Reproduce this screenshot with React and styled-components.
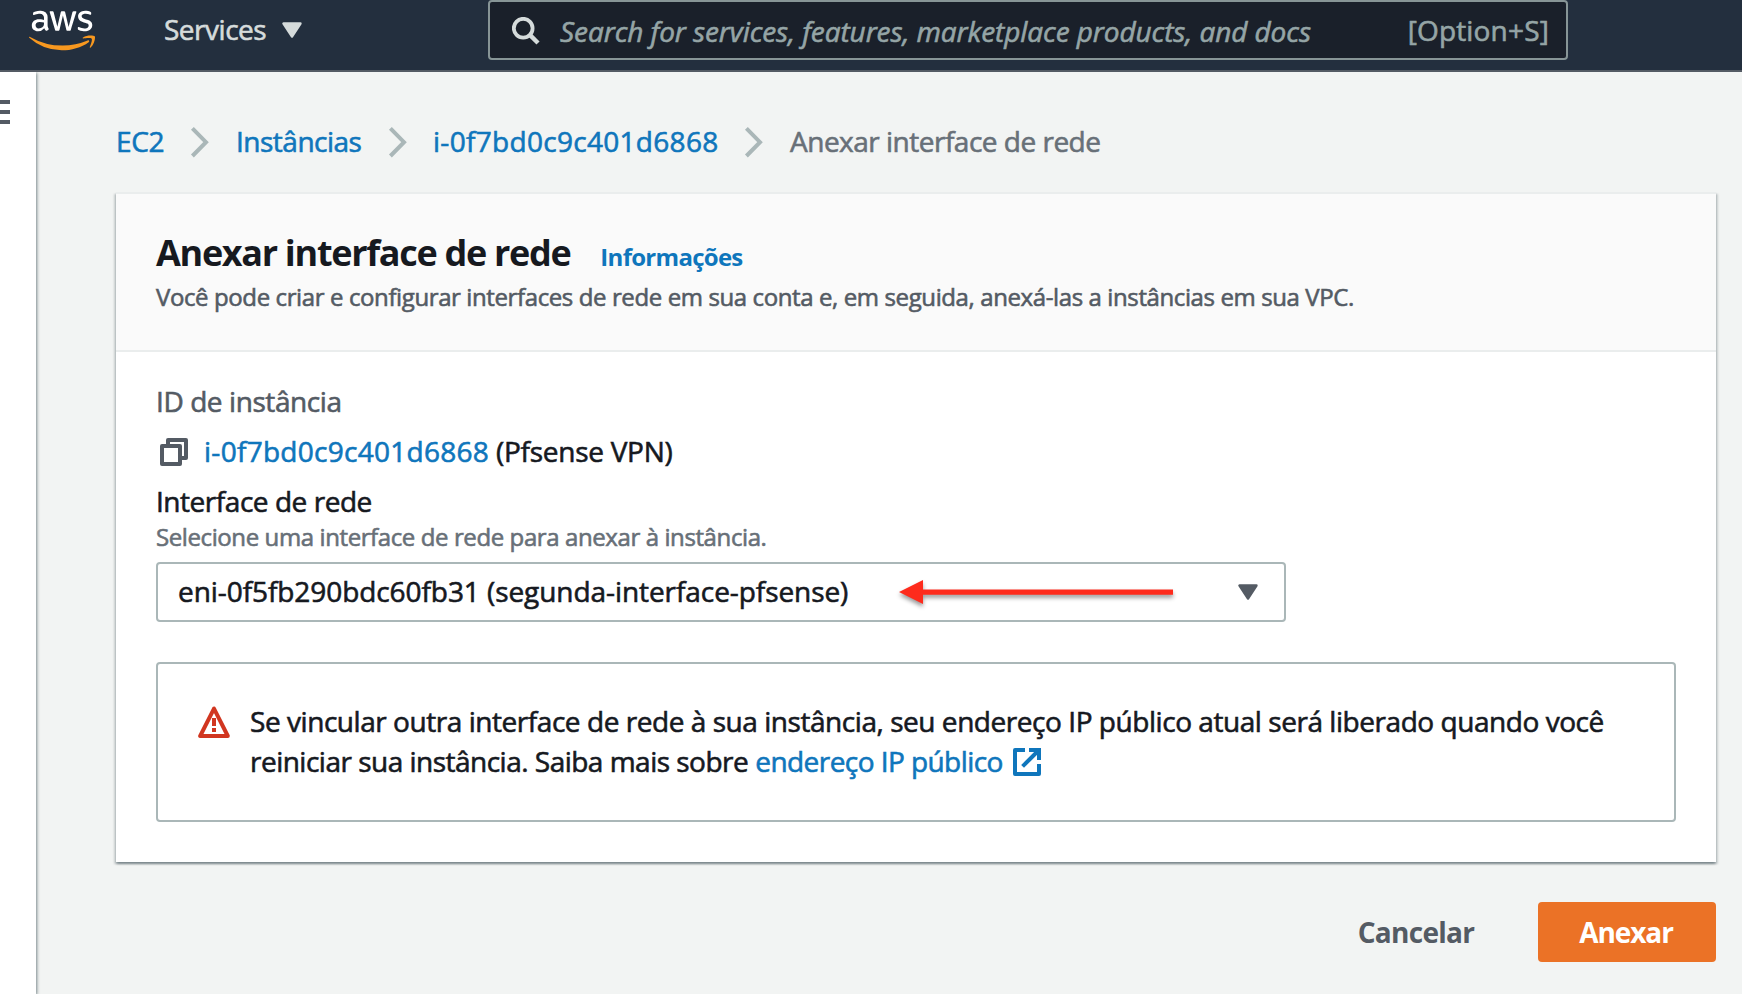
import React from 'react';
import styled, { createGlobalStyle, css } from 'styled-components';
import { FaAws } from 'react-icons/fa';

const colors = {
  nav: '#232f3e',
  navBorder: '#545b64',
  searchBg: '#1a202a',
  navText: '#d5dbdb',
  muted: '#95a5a6',
  page: '#f2f4f3',
  text: '#16191f',
  secondary: '#545b64',
  hint: '#687078',
  link: '#0f76bc',
  line: '#aab7b8',
  hairline: '#eaeded',
  danger: '#d13620',
  primary: '#eb7226',
};

const GlobalStyle = createGlobalStyle`
  *, *::before, *::after { box-sizing: border-box; }
  body {
    margin: 0;
    background: ${colors.page};
    color: ${colors.text};
    font: 28px/40px "Open Sans", "Noto Sans", sans-serif;
    overflow: hidden;
  }
  svg { display: block; flex: none; }
`;

const tracking = css`
  letter-spacing: ${(p) => p.$track ?? -0.46}px;
  -webkit-text-stroke: 0.6px currentColor;
  white-space: nowrap;
`;

const Screen = styled.div`
  display: flex;
  flex-direction: column;
  height: 994px;
  width: 1742px;
`;

const NavBar = styled.header`
  display: flex;
  align-items: flex-start;
  flex: none;
  height: 72px;
  padding-left: 29px;
  background: ${colors.nav};
  border-bottom: 2px solid ${colors.navBorder};
`;

const Logo = styled.div`
  width: 66px;
  padding-top: 4px;

  svg.mark { width: 66px; height: 53px; }
  svg.mark path { fill: url(#aws-mark); }
`;

const ServicesMenu = styled.div`
  ${tracking}
  display: flex;
  align-items: center;
  gap: 16px;
  width: 324px;
  margin: 9px 0 0 69px;
  color: ${colors.navText};

  svg { margin-top: 2px; }
`;

const SearchBox = styled.div`
  display: flex;
  align-items: center;
  width: 1080px;
  height: 60px;
  padding: 2px 17px 0 22px;
  background: ${colors.searchBg};
  border: 2px solid #879596;
  border-radius: 4px;
  color: ${colors.muted};
`;

const Placeholder = styled.span`
  ${tracking}
  flex: 1;
  padding-left: 20px;
  font-style: italic;
`;

const Shortcut = styled.span`
  ${tracking}
  margin-top: -2px;
`;

const Body = styled.div`
  display: flex;
  flex: 1;
`;

const SideRail = styled.aside`
  width: 36px;
  flex: none;
  padding-top: 28px;
  background: #fff;
  box-shadow: 1px 1px 3px 0 rgba(0, 28, 36, 0.5);
  clip-path: inset(0 -6px 0 0);
`;

const Content = styled.main`
  flex: 1;
  padding: 49px 26px 0 80px;
`;

const Breadcrumbs = styled.nav`
  display: flex;
  align-items: center;
  height: 40px;
  margin-bottom: 31px;
`;

const Crumb = styled.span`
  ${tracking}
  width: ${(p) => p.$width}px;
  color: ${(p) => (p.$current ? colors.hint : colors.link)};
`;

const Panel = styled.section`
  border-top: 2px solid ${colors.hairline};
  background: #fff;
  box-shadow: 0 2px 2px 0 rgba(0, 28, 36, 0.3), 2px 2px 2px 0 rgba(0, 28, 36, 0.15),
    -2px 2px 2px 0 rgba(0, 28, 36, 0.15);
`;

const PanelHeader = styled.div`
  height: 158px;
  padding: 37px 40px 0;
  background: #fafafa;
  border-bottom: 2px solid ${colors.hairline};
`;

const TitleRow = styled.div`
  display: flex;
  align-items: baseline;
  gap: 30px;
  height: 44px;
`;

const Title = styled.h1`
  ${tracking}
  -webkit-text-stroke: 0;
  margin: 0;
  font-size: 36px;
  line-height: 44px;
  font-weight: 700;
`;

const InfoLink = styled.a`
  ${tracking}
  -webkit-text-stroke: 0;
  font-size: 24px;
  font-weight: 700;
  color: ${colors.link};
`;

const Description = styled.p`
  ${tracking}
  margin: 6px 0 0;
  font-size: 24px;
  line-height: 32px;
  color: ${colors.secondary};
`;

const PanelBody = styled.div`
  padding: 29px 40px 40px;
`;

const Label = styled.div`
  ${tracking}
  color: ${(p) => (p.$muted ? colors.secondary : colors.text)};
`;

const InstanceRow = styled.div`
  display: flex;
  align-items: center;
  height: 40px;
  margin: 10px 0;
  padding-left: 4px;

  > svg { margin-top: 2px; }
`;

const InstanceLink = styled.a`
  ${tracking}
  width: 292px;
  margin-left: 16px;
  color: ${colors.link};
`;

const Plain = styled.span`
  ${tracking}
`;

const Hint = styled.div`
  ${tracking}
  font-size: 24px;
  line-height: 32px;
  color: ${colors.hint};
`;

const Select = styled.div`
  position: relative;
  display: flex;
  align-items: center;
  justify-content: space-between;
  width: 1130px;
  height: 60px;
  margin: 9px 0 40px;
  padding: 0 26px 0 20px;
  border: 2px solid ${colors.line};
  border-radius: 4px;

  > span { margin-top: -2px; }
`;

const ArrowMark = styled.svg`
  position: absolute;
  left: 735px;
  top: 8px;
  filter: drop-shadow(0 3px 2px rgba(0, 0, 0, 0.4));
`;

const Alert = styled.div`
  display: flex;
  gap: 20px;
  height: 160px;
  padding: 37px 40px 0;
  border: 2px solid ${colors.line};
  border-radius: 4px;

  > svg { margin-top: 5px; }
`;

const AlertLine = styled.div`
  ${tracking}
  display: flex;
  align-items: center;
`;

const InlineLink = styled.a`
  ${tracking}
  display: flex;
  align-items: center;
  gap: 10px;
  margin-left: 7px;
  color: ${colors.link};

  svg { margin-top: 2px; }
`;

const Actions = styled.div`
  display: flex;
  justify-content: flex-end;
  margin-top: 40px;
`;

const Button = styled.button`
  ${tracking}
  height: 60px;
  width: ${(p) => p.$width}px;
  padding: 0 2px 0 0;
  border: 0;
  border-radius: 4px;
  font: inherit;
  font-weight: 700;
  -webkit-text-stroke: 0;
  background: ${(p) => (p.$primary ? colors.primary : 'transparent')};
  color: ${(p) => (p.$primary ? '#fff' : colors.secondary)};
`;

const Caret = ({ color }) => (
  <svg width="20" height="16" viewBox="0 0 20 16">
    <path d="M1.5 1.5h17L10 14.5z" fill={color} stroke={color} strokeWidth="2.4" strokeLinejoin="round" />
  </svg>
);

const SearchIcon = () => (
  <svg width="28" height="28" viewBox="0 0 28 28" fill="none" stroke={colors.navText}>
    <circle cx="11.2" cy="11.2" r="9.4" strokeWidth="3.8" />
    <path d="M17.6 17.6l8.4 8.4" strokeWidth="4.4" />
  </svg>
);

const MenuIcon = () => (
  <svg width="10" height="24" viewBox="0 0 10 24" fill={colors.secondary}>
    <path d="M0 0h10v4H0zM0 10h10v4H0zM0 20h10v4H0z" />
  </svg>
);

const ChevronBox = styled.svg`
  margin: 2px ${(p) => p.$after}px 0 0;
`;

const Chevron = ({ after }) => (
  <ChevronBox $after={after} width="20" height="32" viewBox="0 0 20 32" fill="none" stroke={colors.line} strokeWidth="4">
    <path d="M2.4 2.4L16 16.2 2.4 30" />
  </ChevronBox>
);

const CopyIcon = () => (
  <svg width="28" height="28" viewBox="0 0 28 28" fill="none" stroke={colors.secondary} strokeWidth="4" strokeLinejoin="round">
    <path d="M2 8h18v18H2z" />
    <path d="M8 8V2h18v18h-6" />
  </svg>
);

const WarningIcon = () => (
  <svg width="32" height="32" viewBox="0 0 32 32" fill="none" stroke={colors.danger}>
    <path d="M16 2.6L2.2 30h27.6z" strokeWidth="4" strokeLinejoin="round" />
    <path d="M16 12v8M16 22v4" strokeWidth="4" />
  </svg>
);

const ExternalIcon = () => (
  <svg width="28" height="28" viewBox="0 0 28 28" fill="none" stroke="currentColor" strokeWidth="4">
    <path d="M12 2H2v24h24V16" strokeLinejoin="round" />
    <path d="M16 2h10v10" />
    <path d="M25 3L9.6 18.4" />
  </svg>
);

export default function App() {
  return (
    <Screen>
      <GlobalStyle />
      <NavBar>
        <Logo>
          <svg width="0" height="0">
            <defs>
              <linearGradient id="aws-mark" gradientUnits="userSpaceOnUse" x1="0" y1="0" x2="0" y2="512">
                <stop offset="0.57" stopColor="#fff" />
                <stop offset="0.57" stopColor="#f7981f" />
              </linearGradient>
            </defs>
          </svg>
          <FaAws className="mark" />
        </Logo>
        <ServicesMenu $track={-0.48}>
          Services
          <Caret color={colors.navText} />
        </ServicesMenu>
        <SearchBox>
          <SearchIcon />
          <Placeholder $track={-0.08}>Search for services, features, marketplace products, and docs</Placeholder>
          <Shortcut $track={0.17}>[Option+S]</Shortcut>
        </SearchBox>
      </NavBar>
      <Body>
        <SideRail>
          <MenuIcon />
        </SideRail>
        <Content>
          <Breadcrumbs>
            <Crumb $track={-0.3} $width={74}>EC2</Crumb>
            <Chevron after={26} />
            <Crumb $track={-0.5} $width={152}>Instâncias</Crumb>
            <Chevron after={25} />
            <Crumb $track={0.3} $width={311}>i-0f7bd0c9c401d6868</Crumb>
            <Chevron after={26} />
            <Crumb $track={-0.5} $width={320} $current>Anexar interface de rede</Crumb>
          </Breadcrumbs>
          <Panel>
            <PanelHeader>
              <TitleRow>
                <Title $track={-1.31}>Anexar interface de rede</Title>
                <InfoLink $track={-0.72}>Informações</InfoLink>
              </TitleRow>
              <Description $track={-0.39}>
                Você pode criar e configurar interfaces de rede em sua conta e, em seguida, anexá-las a instâncias em sua VPC.
              </Description>
            </PanelHeader>
            <PanelBody>
              <Label $muted $track={-0.42}>ID de instância</Label>
              <InstanceRow>
                <CopyIcon />
                <InstanceLink $track={0.28}>i-0f7bd0c9c401d6868</InstanceLink>
                <Plain $track={-0.27}>(Pfsense VPN)</Plain>
              </InstanceRow>
              <Label $track={-0.46}>Interface de rede</Label>
              <Hint $track={-0.4}>Selecione uma interface de rede para anexar à instância.</Hint>
              <Select>
                <Plain $track={-0.07}>eni-0f5fb290bdc60fb31 (segunda-interface-pfsense)</Plain>
                <ArrowMark width="290" height="40" viewBox="-6 -8 290 40">
                  <path d="M0 12L24 0v9.4h250v5.4H24V24z" fill="#fe2b1c" />
                </ArrowMark>
                <Caret color={colors.secondary} />
              </Select>
              <Alert>
                <WarningIcon />
                <div>
                  <AlertLine $track={-0.45}>
                    Se vincular outra interface de rede à sua instância, seu endereço IP público atual será liberado quando você
                  </AlertLine>
                  <AlertLine $track={-0.51}>
                    reiniciar sua instância. Saiba mais sobre
                    <InlineLink $track={-0.56}>
                      endereço IP público
                      <ExternalIcon />
                    </InlineLink>
                  </AlertLine>
                </div>
              </Alert>
            </PanelBody>
          </Panel>
          <Actions>
            <Button $track={-0.72} $width={242}>Cancelar</Button>
            <Button $track={-1.07} $width={178} $primary>Anexar</Button>
          </Actions>
        </Content>
      </Body>
    </Screen>
  );
}
